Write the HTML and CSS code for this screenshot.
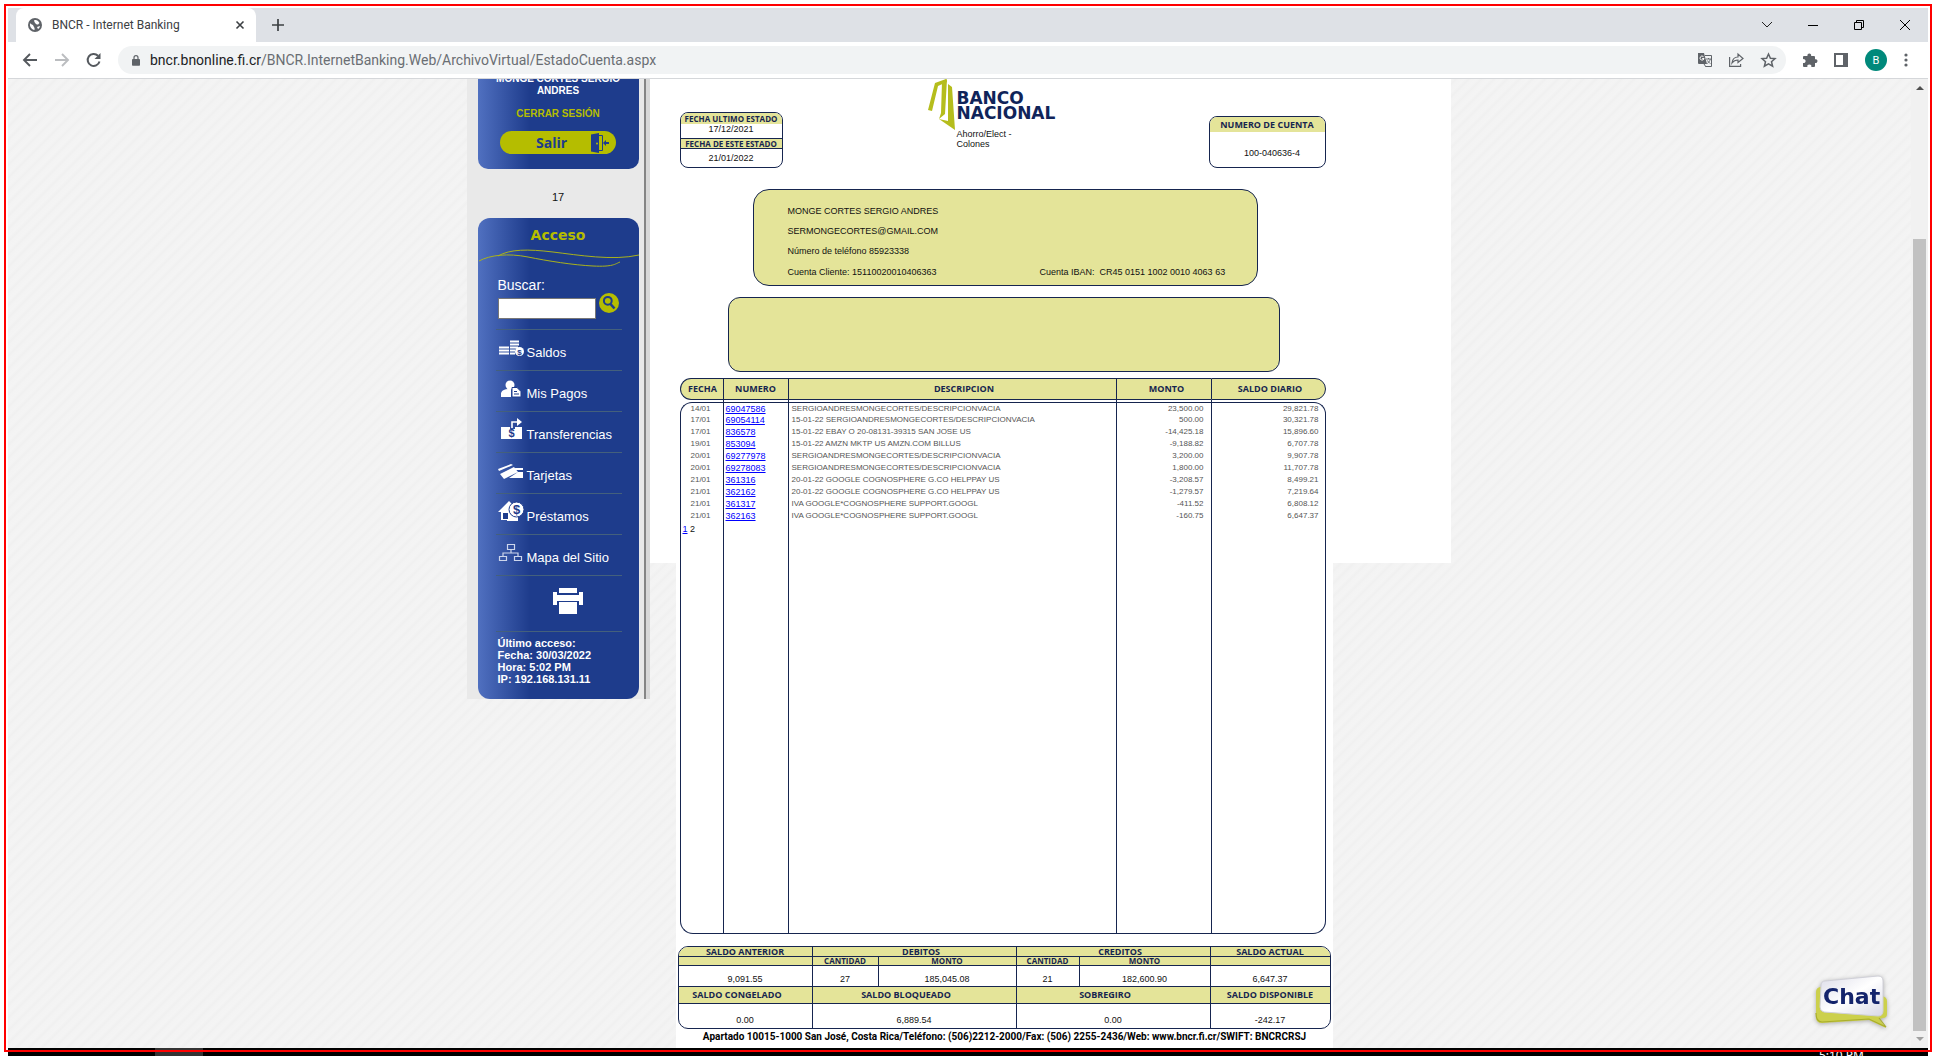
FILE: index.html
```html
<!DOCTYPE html>
<html lang="es">
<head>
<meta charset="utf-8">
<title>BNCR - Internet Banking</title>
<link rel="stylesheet" href="styles.css">
</head>
<body>
<div class="screen">
  <div class="window">
    <header class="tabstrip">
      <div class="tab">
        <svg width="14" height="14" viewBox="0 0 14 14"><circle cx="7" cy="7" r="7" fill="#5f6368"/><path d="M2 5c1 2 3 1 3.500 3S7 9 6.500 12C3.500 11.500 1.500 9 2 5zM6 2.500c2-1 4 0 5.500 2.500-1 .5-1 2-2.500 1.500S6.500 4.500 6 2.500zM9 9l3-1c-.3 1.500-1 2.500-2 3z" fill="#fff"/></svg>
        <span class="tab-title">BNCR - Internet Banking</span>
        <button class="icon" aria-label="Cerrar pestaña"><svg width="8" height="8" viewBox="0 0 8 8"><path d="M.5.5l7 7M7.500.5l-7 7" stroke="#3c4043" stroke-width="1.600"/></svg></button>
      </div>
      <button class="icon new-tab" aria-label="Nueva pestaña"><svg width="12" height="12" viewBox="0 0 12 12"><path d="M6 0v12M0 6h12" stroke="#3c4043" stroke-width="1.700"/></svg></button>
      <div class="window-controls">
        <button class="icon" aria-label="Buscar pestañas"><svg width="12" height="8" viewBox="0 0 12 8"><path d="M1 1l5 5 5-5" fill="none" stroke="#222"/></svg></button>
        <button class="icon" aria-label="Minimizar"><svg width="12" height="10" viewBox="0 0 12 10"><path d="M1 5.500h10" stroke="#000"/></svg></button>
        <button class="icon" aria-label="Restaurar"><svg width="12" height="12" viewBox="0 0 12 12"><path d="M1.500 3.500h7v7h-7zM3.500 3.500v-2h7v7h-2" fill="none" stroke="#000"/></svg></button>
        <button class="icon" aria-label="Cerrar"><svg width="12" height="12" viewBox="0 0 12 12"><path d="M1 1l10 10M11 1L1 11" stroke="#000"/></svg></button>
      </div>
    </header>
    <nav class="toolbar">
      <button class="icon" aria-label="Atrás"><svg width="16" height="16" viewBox="0 0 16 16"><path d="M15 8H2M8 2L2 8l6 6" fill="none" stroke="#55595e" stroke-width="1.900"/></svg></button>
      <button class="icon" aria-label="Adelante"><svg width="16" height="16" viewBox="0 0 16 16"><path d="M1 8h13M8 2l6 6-6 6" fill="none" stroke="#bbbdc0" stroke-width="1.900"/></svg></button>
      <button class="icon" aria-label="Recargar"><svg width="16" height="16" viewBox="0 0 16 16"><path d="M13.500 9.500a6 6 0 1 1-1.500-5.800" fill="none" stroke="#55595e" stroke-width="2"/><path d="M14.500 1v6h-6z" fill="#55595e"/></svg></button>
      <div class="address">
        <svg width="8" height="11" viewBox="0 0 10 13"><rect x="0" y="4.500" width="10" height="8.500" rx="1" fill="#5f6368"/><path d="M2.500 5V3a2.500 2.500 0 0 1 5 0v2" fill="none" stroke="#5f6368" stroke-width="1.500"/></svg>
        <span class="url"><b>bncr.bnonline.fi.cr</b>/BNCR.InternetBanking.Web/ArchivoVirtual/EstadoCuenta.aspx</span>
        <button class="icon" aria-label="Traducir"><svg width="14" height="14" viewBox="0 0 14 14"><path d="M0 0h6l3 11H1a1 1 0 0 1-1-1z" fill="#5f6368"/><path d="M7 2.500h6.500v11H8M6 11l2 3" fill="none" stroke="#5f6368"/><path d="M5.500 3.700A2 2 0 1 0 6 5.500H4.200" fill="none" stroke="#fff"/><path d="M8 6h5M10.500 5v1M12.300 6c-.5 2-1.500 3.500-3 4.500M9.500 7.500c.5 1.200 1.500 2 3 3" fill="none" stroke="#5f6368" stroke-width=".9"/></svg></button>
        <button class="icon" aria-label="Compartir"><svg width="15" height="14" viewBox="0 0 15 14"><path d="M.6 4v9.400h11V11M3 10c.5-4 3-6 6-6V1l5 4.500-5 4V7C6.500 7 4.500 8 3 10z" fill="none" stroke="#5f6368" stroke-width="1.200"/></svg></button>
        <button class="icon" aria-label="Favorito"><svg width="15" height="14" viewBox="0 0 15 14"><path d="M7.500 1l1.900 4.200 4.600.4-3.500 3.100 1.100 4.500-4.100-2.400-4.100 2.400 1.100-4.500L1 5.600l4.600-.4z" fill="none" stroke="#5f6368" stroke-width="1.500"/></svg></button>
      </div>
      <button class="icon" aria-label="Extensiones"><svg width="14" height="14" viewBox="0 0 14 14"><path d="M1 3h3.500a1.900 1.900 0 1 1 3.600 0H11a1 1 0 0 1 1 1v2.300a1.900 1.900 0 1 1 0 3.600V13a1 1 0 0 1-1 1H8.300a2 2 0 1 0-3.900 0H1a1 1 0 0 1-1-1v-3a2 2 0 1 0 0-3.800V4a1 1 0 0 1 1-1z" fill="#5f6368"/></svg></button>
      <button class="icon" aria-label="Panel lateral"><svg width="14" height="14" viewBox="0 0 14 14"><path d="M0 0h14v14H0zM2 2v10h7V2z" fill="#5f6368" fill-rule="evenodd"/></svg></button>
      <button class="icon avatar" aria-label="Perfil">B</button>
      <button class="icon" aria-label="Menú"><svg width="4" height="14" viewBox="0 0 4 14"><circle cx="2" cy="2" r="1.600" fill="#5f6368"/><circle cx="2" cy="7" r="1.600" fill="#5f6368"/><circle cx="2" cy="12" r="1.600" fill="#5f6368"/></svg></button>
    </nav>

    <div class="viewport">
      <div class="page">
        <aside class="sidebar">
          <section class="panel session">
            <strong>MONGE CORTES SERGIO<br>ANDRES</strong>
            <strong class="logout-label">CERRAR SESIÓN</strong>
            <button class="logout"><span>Salir</span>
              <svg width="18" height="20" viewBox="0 0 18 20"><path d="M0 1.500L8 0v20l-8-1.500z" fill="#1e3c8c"/><path d="M8 2.500h3.500v15H8" fill="none" stroke="#1e3c8c"/><path d="M18 10h-4" stroke="#1e3c8c" stroke-width="2"/><path d="M12 10l3-3v6z" fill="#1e3c8c"/><circle cx="6" cy="10.500" r="1" fill="#b5bd00"/></svg>
            </button>
          </section>
          <p class="counter">17</p>
          <section class="panel access">
            <h2>Acceso</h2>
            <svg class="waves" width="161" height="18" viewBox="0 0 161 18"><path d="M1 12C12 6 30 4 50 8s45 8 65 9 22-2 27-4M20 7C32 0 50 0 75 3s60 9 86 3" fill="none" stroke="#a9b21c"/></svg>
            <div class="access-body">
              <label for="q">Buscar:</label>
              <div class="search">
                <input id="q" type="text">
                <button class="icon" aria-label="Buscar"><svg width="20" height="20" viewBox="0 0 20 20"><circle cx="10" cy="10" r="10" fill="#b5bd00"/><circle cx="8.800" cy="7.800" r="3.900" fill="none" stroke="#1e3c8c" stroke-width="2"/><path d="M11.500 11l4 4.500" stroke="#1e3c8c" stroke-width="2.600"/></svg></button>
              </div>
              <ul class="menu">
                <li><svg width="26" height="22" viewBox="0 0 26 22"><path d="M1 9.500h10M1 12.500h10M1 15.500h10M12 3.500h9M12 6.500h9M12 9.500h8M12 12.500h5M12 15.500h5" stroke="#fff" stroke-width="2"/><circle cx="21.500" cy="13.500" r="4.500" fill="#fff"/><text x="21.500" y="16.500" text-anchor="middle" class="coin">$</text></svg><a href="#">Saldos</a></li>
                <li><svg width="26" height="22" viewBox="0 0 26 22"><circle cx="12" cy="6" r="4.500" fill="#fff"/><path d="M3 18v-4c1-3 4-4 7-4h3v8z" fill="#fff"/><path d="M14 8.500h5l4 4V18h-9z" fill="#fff" stroke="#1e3c8c"/><path d="M16 12.500h3M16 15h5" stroke="#1e3c8c"/></svg><a href="#">Mis Pagos</a></li>
                <li><svg width="26" height="22" viewBox="0 0 26 22"><path d="M3 7h9v2h5V7h7v12H3z" fill="#fff"/><path d="M14 8V2h6" fill="none" stroke="#fff" stroke-width="1.600"/><path d="M19 -2l5 4-5 4z" fill="#fff"/><text x="13.500" y="17" text-anchor="middle" class="bill">$</text></svg><a href="#">Transferencias</a></li>
                <li><svg width="26" height="22" viewBox="0 0 26 22"><path d="M0 8l13-5 2 1L1 10zM2 13L16 6l4 5-14 7zM17 7h8v2h-7zM20 11h5v6H11z" fill="#fff"/></svg><a href="#">Tarjetas</a></li>
                <li><svg width="26" height="22" viewBox="0 0 26 22"><path d="M0 10L11 -1l3 3v16H3v-8z" fill="#fff"/><path d="M9 12h11v7H9z" fill="#fff"/><path d="M5 11h5v6H5z" fill="#1e3c8c"/><circle cx="18.500" cy="7.500" r="7.500" fill="#fff" stroke="#1e3c8c"/><text x="18.500" y="12" text-anchor="middle" class="loan">$</text></svg><a href="#">Préstamos</a></li>
                <li><svg width="26" height="22" viewBox="0 0 26 22"><path d="M9.500 1.500h7v5h-7zM1.500 13.500h7v4h-7zM16.500 13.500h7v4h-7zM13 6.500v3.500M5 13v-3h15v3" fill="none" stroke="#cdd6ec" stroke-width="1.200"/></svg><a href="#">Mapa del Sitio</a></li>
              </ul>
              <button class="icon print" aria-label="Imprimir"><svg width="30" height="26" viewBox="0 0 30 26"><path d="M6 0h18v5H6zM0 4h4v3h22V4h4v13h-4v-4H4v4H0zM6 14h18v12H6z" fill="#fff"/></svg></button>
              <p class="last">Último acceso:<br>Fecha: 30/03/2022<br>Hora: 5:02 PM<br>IP: 192.168.131.11</p>
            </div>
          </section>
        </aside>

        <main class="content">
          <div class="statement">
            <div class="masthead">
              <dl class="box dates">
                <dt>FECHA ULTIMO ESTADO</dt><dd>17/12/2021</dd>
                <dt class="ruled">FECHA DE ESTE ESTADO</dt><dd class="low">21/01/2022</dd>
              </dl>
              <div class="brand">
                <svg width="29" height="50" viewBox="0 0 29 50"><path d="M0 31L7 4l11-4 1 3-9 4-6 25z" fill="#b5bd1c"/><path d="M14 3l5-3-2 35-6 5 2-6z" fill="#b5bd1c"/><path d="M20 5l4 3 3 43-16-11 9 2z" fill="#b5bd1c"/></svg>
                <div>
                  <div class="brand-name">BANCO<br>NACIONAL</div>
                  <p>Ahorro/Elect -<br>Colones</p>
                </div>
              </div>
              <dl class="box account"><dt>NUMERO DE CUENTA</dt><dd>100-040636-4</dd></dl>
            </div>
            <section class="box client">
              <p>MONGE CORTES SERGIO ANDRES</p>
              <p>SERMONGECORTES@GMAIL.COM</p>
              <p>Número de teléfono 85923338</p>
              <p class="pair"><span>Cuenta Cliente: 15110020010406363</span><span>Cuenta IBAN:&nbsp; CR45 0151 1002 0010 4063 63</span></p>
            </section>
            <section class="box message"></section>

            <table class="ledger">
              <colgroup><col class="c1"><col class="c2"><col class="c3"><col class="c4"><col class="c5"></colgroup>
              <thead>
                <tr><th>FECHA</th><th>NUMERO</th><th>DESCRIPCION</th><th>MONTO</th><th>SALDO DIARIO</th></tr>
                <tr class="gap"><td></td><td></td><td></td><td></td><td></td></tr>
              </thead>
              <tbody>
                <tr><td>14/01</td><td><a href="#">69047586</a></td><td>SERGIOANDRESMONGECORTES/DESCRIPCIONVACIA</td><td>23,500.00</td><td>29,821.78</td></tr>
                <tr><td>17/01</td><td><a href="#">69054114</a></td><td>15-01-22 SERGIOANDRESMONGECORTES/DESCRIPCIONVACIA</td><td>500.00</td><td>30,321.78</td></tr>
                <tr><td>17/01</td><td><a href="#">836578</a></td><td>15-01-22 EBAY O 20-08131-39315 SAN JOSE US</td><td>-14,425.18</td><td>15,896.60</td></tr>
                <tr><td>19/01</td><td><a href="#">853094</a></td><td>15-01-22 AMZN MKTP US AMZN.COM BILLUS</td><td>-9,188.82</td><td>6,707.78</td></tr>
                <tr><td>20/01</td><td><a href="#">69277978</a></td><td>SERGIOANDRESMONGECORTES/DESCRIPCIONVACIA</td><td>3,200.00</td><td>9,907.78</td></tr>
                <tr><td>20/01</td><td><a href="#">69278083</a></td><td>SERGIOANDRESMONGECORTES/DESCRIPCIONVACIA</td><td>1,800.00</td><td>11,707.78</td></tr>
                <tr><td>21/01</td><td><a href="#">361316</a></td><td>20-01-22 GOOGLE COGNOSPHERE G.CO HELPPAY US</td><td>-3,208.57</td><td>8,499.21</td></tr>
                <tr><td>21/01</td><td><a href="#">362162</a></td><td>20-01-22 GOOGLE COGNOSPHERE G.CO HELPPAY US</td><td>-1,279.57</td><td>7,219.64</td></tr>
                <tr><td>21/01</td><td><a href="#">361317</a></td><td>IVA GOOGLE*COGNOSPHERE SUPPORT.GOOGL</td><td>-411.52</td><td>6,808.12</td></tr>
                <tr><td>21/01</td><td><a href="#">362163</a></td><td>IVA GOOGLE*COGNOSPHERE SUPPORT.GOOGL</td><td>-160.75</td><td>6,647.37</td></tr>
              </tbody>
              <tfoot>
                <tr><td class="pager"><a href="#">1</a> 2</td><td></td><td></td><td></td><td></td></tr>
              </tfoot>
            </table>

            <div class="totals-box">
            <table class="totals">
              <colgroup><col class="t1"><col class="t2"><col class="t3"><col class="t4"><col class="t5"><col class="t6"></colgroup>
              <tr class="head"><th>SALDO ANTERIOR</th><th colspan="2" class="right">DEBITOS</th><th colspan="2" class="right">CREDITOS</th><th>SALDO ACTUAL</th></tr>
              <tr class="sub"><th></th><th>CANTIDAD</th><th>MONTO</th><th>CANTIDAD</th><th>MONTO</th><th></th></tr>
              <tr class="vals"><td>9,091.55</td><td>27</td><td>185,045.08</td><td>21</td><td>182,600.90</td><td>6,647.37</td></tr>
              <tr class="head2"><th class="left">SALDO CONGELADO</th><th colspan="2" class="left">SALDO BLOQUEADO</th><th colspan="2" class="left">SOBREGIRO</th><th>SALDO DISPONIBLE</th></tr>
              <tr class="vals last-row"><td>0.00</td><td colspan="2">6,889.54</td><td colspan="2">0.00</td><td>-242.17</td></tr>
            </table>
            </div>
            <p class="imprint">Apartado 10015-1000 San José, Costa Rica/Teléfono: (506)2212-2000/Fax: (506) 2255-2436/Web: www.bncr.fi.cr/SWIFT: BNCRCRSJ</p>
          </div>
        </main>
      </div>
      <button class="icon chat" aria-label="Chat"><svg width="76" height="54" viewBox="0 0 76 54">
        <defs><linearGradient id="g" x1="0" y1="0" x2="1" y2="1"><stop offset="0" stop-color="#dcdce8"/><stop offset=".5" stop-color="#fff"/><stop offset="1" stop-color="#d8d8e6"/></linearGradient></defs>
        <path d="M2 17q0-4 4-5l62 9q5 1 5 5v13q0 4-4 4l-4 1 7 9-17-8-47 3q-6 0-6-6z" fill="#ccd04c"/><path d="M2 38q0 9 6 9l47-3 17 8-7-9" fill="none" stroke="#a9ad2c" stroke-width="1.200"/>
        <path d="M11 6L64 1q5 0 5 5v30q0 5-5 5L10 37q-4-1-4-5l1-21q0-5 4-5z" fill="url(#g)" stroke="#d0d0d8"/>
        <text x="9" y="29" class="chat-text">Chat</text></svg></button>
      <div class="scrollbar"><span class="arrow up"></span><span class="thumb"></span><span class="arrow down"></span></div>
    </div>
  </div>
  <footer class="taskbar"><span class="task"></span><span class="clock">5:10 PM</span></footer>
  <div class="outline"></div>
</div>
</body>
</html>
```
FILE: styles.css
```css
* { box-sizing: border-box; }
body { margin: 0; background: #fff; font-family: "Liberation Sans", Arial, sans-serif; }
p, h2, ul, dl, dd { margin: 0; padding: 0; }
svg { display: block; flex: none; overflow: visible; }

.screen { position: relative; height: 100vh; padding: 8px 8px 0; display: flex; flex-direction: column; overflow: hidden; }
.outline { position: absolute; inset: 4px; border: 2px solid #f00; pointer-events: none; }
.window { flex: 1; min-height: 0; display: flex; flex-direction: column; }
.icon { border: 0; padding: 0; background: none; display: flex; align-items: center; justify-content: center; }

/* browser chrome */
.tabstrip { height: 34px; flex: none; background: #dee1e6; display: flex; align-items: center; padding-left: 8px; }
.tab { width: 240px; height: 34px; background: #fff; border-radius: 8px 8px 0 0; display: flex; align-items: center; padding: 0 12px; gap: 10px; }
.tab-title { flex: 1; font: 12px/16px Roboto, sans-serif; color: #3c4043; white-space: nowrap; }
.new-tab { margin-left: 16px; }
.window-controls { margin-left: auto; display: flex; align-items: center; gap: 34px; padding-right: 17px; }
.toolbar { height: 37px; flex: none; background: #fff; border-bottom: 1px solid #d5d7da; display: flex; align-items: center; gap: 17px; padding: 0 20px 0 14px; }
.toolbar > .icon { flex: none; }
.toolbar > .icon:nth-child(-n+3) { margin-right: -1px; }
.address { flex: 1; height: 28px; border-radius: 14px; background: #f1f3f4; display: flex; align-items: center; gap: 17px; padding: 0 10px 0 14px; }
.url { flex: 1; margin-left: -10px; padding-left: 3px; font: 14px/20px Roboto, sans-serif; color: #6a6e73; }
.url b { font-weight: 400; color: #202124; }
.avatar { width: 22px; height: 22px; border-radius: 50%; background: #00897b; color: #fff; font: 11px Roboto, sans-serif; }

/* page area */
.viewport { position: relative; flex: 1; min-height: 0; overflow: hidden; display: flex; background: repeating-linear-gradient(135deg, #f3f3f3 0, #f4f4f4 4px, #f0f0f0 7px, #f3f3f3 9px); }
.page { flex: 1; display: flex; justify-content: center; align-items: flex-start; padding-right: 2px; }
.scrollbar { width: 17px; background: #f1f1f1; display: flex; flex-direction: column; align-items: center; padding: 7px 0; }
.thumb { width: 13px; flex: 1; background: #c1c1c1; margin: 149px 0 6px; }
.arrow { border: 4px solid transparent; }
.up { border-top: 0; border-bottom-color: #505050; }
.down { border-bottom: 0; border-top-color: #a0a0a0; }
.chat { position: absolute; right: 38px; bottom: 19px; filter: drop-shadow(0 1px 2px #aaa); }
.chat-text { font: bold 22px "DejaVu Sans", sans-serif; fill: #14246c; }

/* sidebar */
.sidebar { width: 183px; flex: none; background: #e9e9e9; border-right: 4px solid #d8d8d8; padding: 0 7px 0 11px; box-shadow: inset -2px 0 #858585; }
.panel { color: #fff; background: linear-gradient(90deg, #5070c0 0, #1e3c8c 32%); }
.session { margin-top: -6px; height: 96px; border-radius: 0 0 10px 10px; display: flex; flex-direction: column; align-items: center; font-size: 10px; line-height: 12px; text-align: center; }
.logout-label { color: #b5bd00; margin: 11px 0 11px; }
.logout { width: 116px; height: 23px; border: 0; border-radius: 12px; background: #b5bd00; color: #1e3c8c; font: bold 14px/20px "Open Sans", sans-serif; padding: 0 7px 0 36px; display: flex; justify-content: space-between; align-items: center; }
.counter { font-size: 11px; line-height: 13px; padding: 22px 0 14px; text-align: center; color: #111; }
.access { border-radius: 12px; }
.access h2 { font: bold 14px/20px "DejaVu Sans", sans-serif; color: #b5bd00; text-align: center; padding: 7px 0 4px; }
.access-body { padding: 10px 17px 14px 18px; }
.access label { display: block; font-size: 14px; line-height: 16px; padding-left: 2px; }
.search { display: flex; gap: 3px; padding: 0 0 9px 2px; height: 53px; }
.search input { width: 98px; height: 21px; margin-top: 5px; border: 1px solid #777; background: #fff; padding: 0 2px; }
.search .icon { height: 20px; }
.menu { list-style: none; margin-top: -17px; border-bottom: 1px solid #44607c; }
.menu li { height: 41px; border-top: 1px solid #44607c; display: flex; align-items: flex-start; gap: 3px; padding: 8px 0 0 2px; }
.menu a { color: #fff; text-decoration: none; font-size: 13px; line-height: 16px; margin-top: 7px; }
.coin, .bill, .loan { font: bold 8px "Liberation Sans", sans-serif; fill: #1e3c8c; }
.bill { font-size: 11px; }
.loan { font-size: 13px; }
.print { width: 100%; height: 55px; padding: 0 0 5px 18px; }
.last { border-top: 1px solid #44607c; padding: 5px 0 0 2px; font-size: 11px; line-height: 12px; font-weight: bold; }

/* statement */
.content { width: 801px; height: 484px; flex: none; background: #fff; padding-left: 26px; }
.statement { width: 657px; background: #fff; padding: 0 3px 0 4px; font-size: 9px; line-height: 10px; color: #111; min-height: 980px; }
.box { border: 1px solid #16254f; border-radius: 8px; overflow: hidden; background: #fff; }
.masthead { height: 110px; display: flex; align-items: flex-start; padding-right: 4px; }
.dates, .account { text-align: center; }
.dates dt, .account dt, .ledger th, .totals th { background: #e4e499; color: #16254f; font-family: "Open Sans", sans-serif; font-weight: 700; font-size: 8px; }
.dates { width: 103px; height: 56px; margin-top: 33px; }
.dates dt { line-height: 11px; }
.dates dd { height: 14px; }
.dates .ruled { border-top: 1px solid #16254f; border-bottom: 1px solid #16254f; line-height: 9px; height: 11px; }
.dates .low { padding-top: 4px; }
.brand { margin-left: 145px; display: flex; }
.brand-name { font: bold 17px/15px "DejaVu Sans", sans-serif; color: #10245a; padding-top: 12px; }
.brand p { margin-top: 8px; }
.account { width: 117px; height: 52px; margin: 37px 0 0 auto; }
.account dt { line-height: 15px; font-size: 9px; }
.account dd { padding: 16px 0 0 10px; }
.client { width: 505px; height: 97px; margin-left: 73px; border-radius: 16px; background: #e4e499; padding: 16px 0 0 34px; }
.client p { margin-bottom: 10px; }
.client .pair { display: flex; margin-top: 11px; }
.pair span:first-child { width: 252px; }
.message { width: 552px; height: 75px; margin: 11px 0 6px 48px; border-radius: 12px; background: #e4e499; }

.ledger { width: 646px; table-layout: fixed; border-collapse: separate; border-spacing: 0; color: #555; font-size: 8px; }
.c1 { width: 43px; } .c2 { width: 65px; } .c3 { width: 328px; } .c4 { width: 95px; } .c5 { width: 115px; }
.ledger td, .ledger th { border-left: 1px solid #16254f; padding: 0; }
.ledger th { height: 22px; border-top: 1px solid #16254f; border-bottom: 1px solid #16254f; font-size: 9px; line-height: 12px; }
.ledger th:first-child { border-radius: 11px 0 0 11px; padding-left: 2px; }
.ledger th:nth-child(3) { padding-left: 24px; }
.ledger th:nth-child(4) { padding-left: 6px; }
.ledger th:last-child { border-right: 1px solid #16254f; border-radius: 0 11px 11px 0; padding-left: 4px; }
.ledger .gap td { height: 2px; }
.ledger .gap td:first-child { border-left-color: transparent; }
.ledger tbody td { height: 12px; line-height: 10px; white-space: nowrap; }
.ledger tbody tr:first-child td { border-top: 1px solid #16254f; }
.ledger tbody tr:first-child td:first-child { border-top-left-radius: 12px; }
.ledger tbody tr:first-child td:last-child { border-top-right-radius: 12px; }
.ledger tbody td:last-child, .ledger tfoot td:last-child { border-right: 1px solid #16254f; }
.ledger tbody td:nth-child(1) { padding-left: 10px; }
.ledger tbody td:nth-child(2) { padding-left: 2px; font-size: 9px; }
.ledger tbody td:nth-child(3) { padding-left: 3px; }
.ledger tbody td:nth-child(4) { padding-right: 7px; text-align: right; }
.ledger tbody td:nth-child(5) { padding-right: 6px; text-align: right; }
.ledger a { color: #00f; }
.ledger tfoot td { height: 412px; vertical-align: top; border-bottom: 1px solid #16254f; font-size: 9px; color: #111; }
.ledger tfoot td:first-child { border-bottom-left-radius: 13px; }
.ledger tfoot td:last-child { border-bottom-right-radius: 13px; }
.ledger .pager { padding: 2px 0 0 2px; }

.totals-box { width: 653px; margin: 12px 0 0 -2px; border: 1px solid #16254f; border-radius: 10px; overflow: hidden; }
.totals { width: 651px; table-layout: fixed; border-collapse: separate; border-spacing: 0; text-align: center; }
.t1 { width: 134px; } .t2 { width: 66px; } .t3 { width: 138px; } .t4 { width: 63px; } .t5 { width: 131px; } .t6 { width: 119px; }
.totals th, .totals td { padding: 0; border-right: 1px solid #16254f; border-bottom: 1px solid #16254f; }
.totals th:last-child, .totals td:last-child { border-right: 0; }
.totals .head th { height: 10px; line-height: 8px; font-size: 9px; }
.totals .sub th { height: 9px; line-height: 8px; }
.totals td { height: 21px; padding-top: 6px; }
.totals .last-row td { border-bottom: 0; height: 24px; padding-top: 8px; }
.totals .head2 th { height: 17px; font-size: 9px; line-height: 12px; }
.totals .right { padding-left: 14px; }
.totals .left { padding-right: 16px; }
.imprint { font: bold 10px/16px Roboto, sans-serif; color: #000; text-align: center; white-space: nowrap; }

.taskbar { height: 8px; flex: none; background: #000; overflow: hidden; display: flex; justify-content: space-between; padding: 0 64px 0 147px; color: #fff; }
.task { width: 48px; background: #333; }
.clock { font: 12px/16px "Noto Sans", sans-serif; }
```
